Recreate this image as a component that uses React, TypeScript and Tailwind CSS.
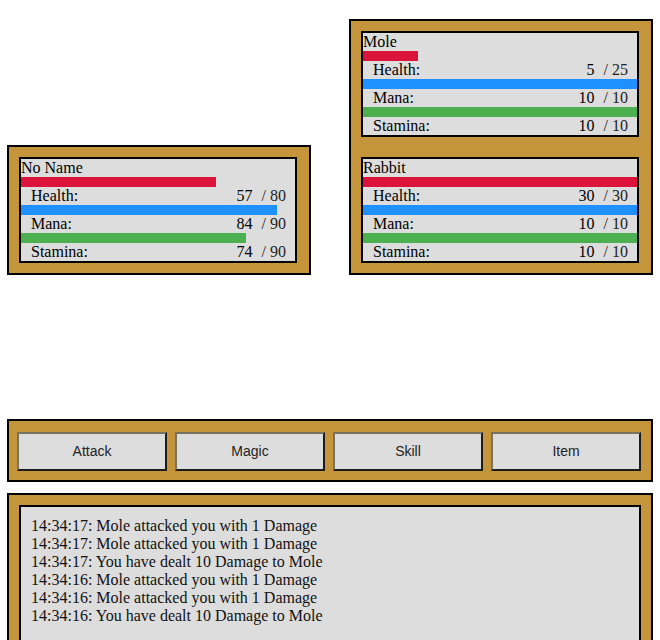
import React from "react";

interface Stat {
    label: string;
    cur: number;
    max: number;
    color: string;
}

interface Unit {
    name: string;
    stats: Stat[];
}

const player: Unit = {
    name: "No Name",
    stats: [
        { label: "Health:", cur: 57, max: 80, color: "bg-[#dc143c]" },
        { label: "Mana:", cur: 84, max: 90, color: "bg-[#1e90ff]" },
        { label: "Stamina:", cur: 74, max: 90, color: "bg-[#4caf50]" },
    ],
};

const enemies: Unit[] = [
    {
        name: "Mole",
        stats: [
            { label: "Health:", cur: 5, max: 25, color: "bg-[#dc143c]" },
            { label: "Mana:", cur: 10, max: 10, color: "bg-[#1e90ff]" },
            { label: "Stamina:", cur: 10, max: 10, color: "bg-[#4caf50]" },
        ],
    },
    {
        name: "Rabbit",
        stats: [
            { label: "Health:", cur: 30, max: 30, color: "bg-[#dc143c]" },
            { label: "Mana:", cur: 10, max: 10, color: "bg-[#1e90ff]" },
            { label: "Stamina:", cur: 10, max: 10, color: "bg-[#4caf50]" },
        ],
    },
];

const log = [
    "14:34:17: Mole attacked you with 1 Damage",
    "14:34:17: Mole attacked you with 1 Damage",
    "14:34:17: You have dealt 10 Damage to Mole",
    "14:34:16: Mole attacked you with 1 Damage",
    "14:34:16: Mole attacked you with 1 Damage",
    "14:34:16: You have dealt 10 Damage to Mole",
];

function UnitBox({ unit }: { unit: Unit }) {
    return (
        <div className="w-[278px] border-2 border-black bg-[#dddddd] text-black">
            <div className="h-[18px] leading-[18px]">{unit.name}</div>
            {unit.stats.map((s) => (
                <div key={s.label}>
                    <div className="h-[10px]">
                        <div className={`h-full ${s.color}`} style={{ width: `${(s.cur / s.max) * 100}%` }} />
                    </div>
                    <div className="flex h-[18px] items-center justify-between pl-[10px] pr-[9px] leading-[18px]">
                        <span>{s.label}</span>
                        <span>
                            <span className="mr-[9px]">{s.cur}</span>
                            <span className="text-[#222]">/ {s.max}</span>
                        </span>
                    </div>
                </div>
            ))}
        </div>
    );
}

export default function App() {
    return (
        <div className="px-[7px] pt-[19px] font-['Liberation_Serif',serif] text-[16px]">
            <div className="flex items-end justify-between">
                <div className="w-[304px] border-2 border-black bg-[#c4953a] p-[10px]">
                    <UnitBox unit={player} />
                </div>
                <div className="flex w-[304px] flex-col gap-[20px] border-2 border-black bg-[#c4953a] p-[10px]">
                    {enemies.map((e) => (
                        <UnitBox key={e.name} unit={e} />
                    ))}
                </div>
            </div>

            <div className="mt-[144px] flex gap-2 border-2 border-black bg-[#c4953a] pt-[11px] pr-[10px] pb-[9px] pl-2">
                {["Attack", "Magic", "Skill", "Item"].map((b) => (
                    <button
                        key={b}
                        className="h-[39px] w-[150px] border-2 border-t-[#777262] border-l-[#777262] border-r-[#1c1c1c] border-b-[#1c1c1c] bg-[#dddddd] font-['Liberation_Sans',Arial,sans-serif] text-[14px] text-[#222]"
                    >
                        {b}
                    </button>
                ))}
            </div>

            <div className="mt-[11px] border-2 border-black bg-[#c4953a] px-[10px] pt-[10px]">
                <div className="h-[140px] w-[622px] border-2 border-black bg-[#dddddd] p-[10px] text-[#111]">
                    {log.map((l, i) => (
                        <div key={i} className="leading-[18px]">
                            {l}
                        </div>
                    ))}
                </div>
            </div>
        </div>
    );
}
